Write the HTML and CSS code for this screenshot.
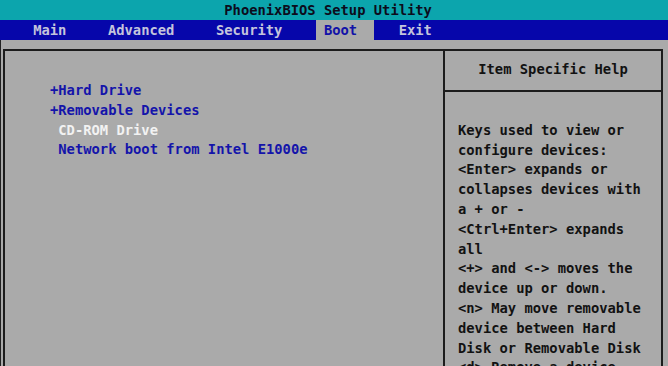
FILE: index.html
```html
<html>

<head>
  <title>PhoenixBIOS Setup Utility</title>
  <link rel="stylesheet" href="styles.css">
</head>

<body>
  <div class="title-bar">PhoenixBIOS Setup Utility</div>
  <div class="menu-bar">
    <span class="menu-item">Main</span>
    <span class="menu-item">Advanced</span>
    <span class="menu-item">Security</span>
    <span class="menu-item active">Boot</span>
    <span class="menu-item">Exit</span>
  </div>
  <div class="screen">
    <div class="frame">
      <div class="boot-list">
        <div class="boot-item">+Hard Drive</div>
        <div class="boot-item">+Removable Devices</div>
        <div class="boot-item selected"> CD-ROM Drive</div>
        <div class="boot-item"> Network boot from Intel E1000e</div>
      </div>
      <div class="help">
        <div class="help-title">Item Specific Help</div>
        <div class="help-text">
          <div class="help-line">Keys used to view or</div>
          <div class="help-line">configure devices:</div>
          <div class="help-line">&lt;Enter&gt; expands or</div>
          <div class="help-line">collapses devices with</div>
          <div class="help-line">a + or -</div>
          <div class="help-line">&lt;Ctrl+Enter&gt; expands</div>
          <div class="help-line">all</div>
          <div class="help-line">&lt;+&gt; and &lt;-&gt; moves the</div>
          <div class="help-line">device up or down.</div>
          <div class="help-line">&lt;n&gt; May move removable</div>
          <div class="help-line">device between Hard</div>
          <div class="help-line">Disk or Removable Disk</div>
          <div class="help-line">&lt;d&gt; Remove a device</div>
        </div>
      </div>
    </div>
  </div>
</body>

</html>
```

FILE: styles.css
```css
body {
  margin: 0;
  height: 366px;
  overflow: hidden;
  background: #aaaaaa;
  font-family: 'DejaVu Sans Mono', monospace;
  font-weight: bold;
  font-size: 13.8px;
  line-height: 19.8px;
}

.title-bar {
  height: 20px;
  line-height: 21px;
  background: #0ca5ad;
  color: #0c0c1c;
  padding-left: 27ch;
  white-space: pre;
}

.menu-bar {
  height: 20px;
  line-height: 20px;
  background: #0606aa;
  display: flex;
  gap: 2ch;
  padding-left: 3ch;
}

.menu-item {
  color: #c4c4dc;
  padding: 0 2ch 0 1ch;
}

.menu-item.active {
  background: #aaaaaa;
  color: #1212a8;
}

.screen {
  padding: 9px 5px 0 0;
  border-left: 1px solid #222;
  height: 326px;
  overflow: hidden;
}

.frame {
  margin-left: 2px;
  height: 400px;
  border: 2px solid #1c1c1c;
  display: flex;
}

.boot-list {
  width: 440px;
  border-right: 2px solid #1c1c1c;
  padding-top: 30px;
  padding-left: 45px;
  box-sizing: border-box;
}

.boot-item {
  color: #1414aa;
  white-space: pre;
}

.boot-item.selected {
  color: #f2f2f2;
}

.help {
  flex: 1;
  color: #121212;
}

.help-title {
  text-align: center;
  padding: 9px 0 10px;
  border-bottom: 2px solid #1c1c1c;
}

.help-text {
  padding: 29px 0 0 13px;
}

.help-line {
  white-space: pre;
}
```
